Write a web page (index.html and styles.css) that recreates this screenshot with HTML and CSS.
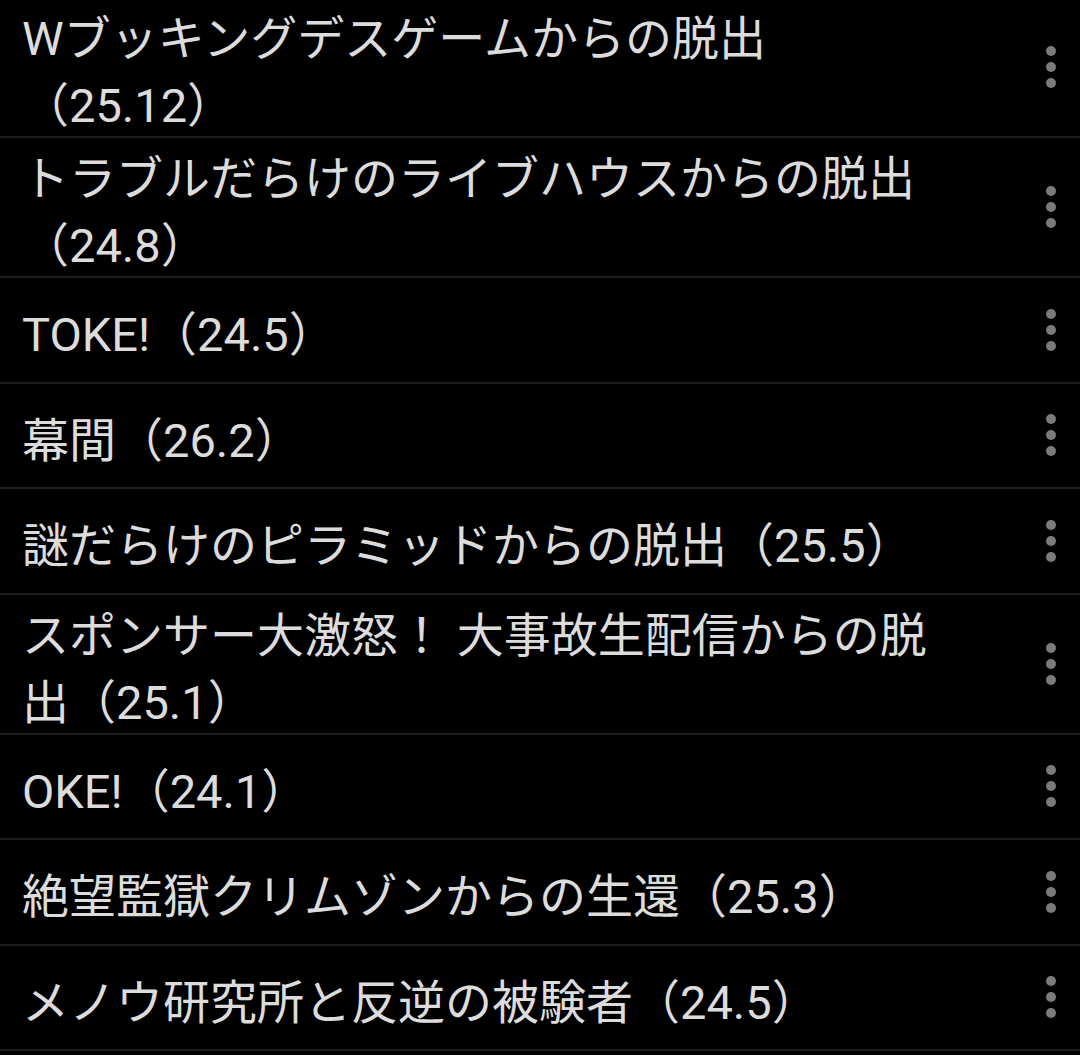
FILE: index.html
```html
<!DOCTYPE html>
<html lang="ja">
<head>
    <meta charset="UTF-8">
    <title>リスト</title>
    <meta name="viewport" content="width=device-width, initial-scale=1.0">
    <link rel="stylesheet" href="styles.css">
</head>
<body>
    <ul class="list">
        <li class="item">
            <span class="title">Wブッキングデスゲームからの脱出（25.12）</span>
            <span class="menu"><svg width="12" height="44" viewBox="0 0 12 44"><circle cx="6" cy="6" r="5"/><circle cx="6" cy="22" r="5"/><circle cx="6" cy="38" r="5"/></svg></span>
        </li>
        <li class="item">
            <span class="title">トラブルだらけのライブハウスからの脱出（24.8）</span>
            <span class="menu"><svg width="12" height="44" viewBox="0 0 12 44"><circle cx="6" cy="6" r="5"/><circle cx="6" cy="22" r="5"/><circle cx="6" cy="38" r="5"/></svg></span>
        </li>
        <li class="item">
            <span class="title">TOKE!（24.5）</span>
            <span class="menu"><svg width="12" height="44" viewBox="0 0 12 44"><circle cx="6" cy="6" r="5"/><circle cx="6" cy="22" r="5"/><circle cx="6" cy="38" r="5"/></svg></span>
        </li>
        <li class="item">
            <span class="title">幕間（26.2）</span>
            <span class="menu"><svg width="12" height="44" viewBox="0 0 12 44"><circle cx="6" cy="6" r="5"/><circle cx="6" cy="22" r="5"/><circle cx="6" cy="38" r="5"/></svg></span>
        </li>
        <li class="item">
            <span class="title">謎だらけのピラミッドからの脱出（25.5）</span>
            <span class="menu"><svg width="12" height="44" viewBox="0 0 12 44"><circle cx="6" cy="6" r="5"/><circle cx="6" cy="22" r="5"/><circle cx="6" cy="38" r="5"/></svg></span>
        </li>
        <li class="item">
            <span class="title">スポンサー大激怒！ 大事故生配信からの脱出（25.1）</span>
            <span class="menu"><svg width="12" height="44" viewBox="0 0 12 44"><circle cx="6" cy="6" r="5"/><circle cx="6" cy="22" r="5"/><circle cx="6" cy="38" r="5"/></svg></span>
        </li>
        <li class="item">
            <span class="title">OKE!（24.1）</span>
            <span class="menu"><svg width="12" height="44" viewBox="0 0 12 44"><circle cx="6" cy="6" r="5"/><circle cx="6" cy="22" r="5"/><circle cx="6" cy="38" r="5"/></svg></span>
        </li>
        <li class="item">
            <span class="title">絶望監獄クリムゾンからの生還（25.3）</span>
            <span class="menu"><svg width="12" height="44" viewBox="0 0 12 44"><circle cx="6" cy="6" r="5"/><circle cx="6" cy="22" r="5"/><circle cx="6" cy="38" r="5"/></svg></span>
        </li>
        <li class="item">
            <span class="title">メノウ研究所と反逆の被験者（24.5）</span>
            <span class="menu"><svg width="12" height="44" viewBox="0 0 12 44"><circle cx="6" cy="6" r="5"/><circle cx="6" cy="22" r="5"/><circle cx="6" cy="38" r="5"/></svg></span>
        </li>
    </ul>
</body>
</html>
```

FILE: styles.css
```css
html, body {
    margin: 0;
    background: #000;
}
body {
    font-family: Roboto, "Noto Sans CJK JP", sans-serif;
    color: #dcdcdc;
    overflow: hidden;
}
.list {
    list-style: none;
    margin: -2px 0 0 0;
    padding: 0;
}
.item {
    display: flex;
    align-items: center;
    min-height: 105.5px;
    padding: 2px 0 2px 22px;
    box-sizing: border-box;
    border-bottom: 2px solid #1c1c1c;
}
/* text sits a little low in the row */
.title {
    width: 925px;
    font-size: 47px;
    line-height: 67px;
    padding-top: 5px;
    margin-bottom: -5px;
}
.menu {
    margin-left: auto;
    width: 58px;
    display: flex;
    justify-content: center;
}
.menu svg {
    fill: #7b7b7b;
}
```
